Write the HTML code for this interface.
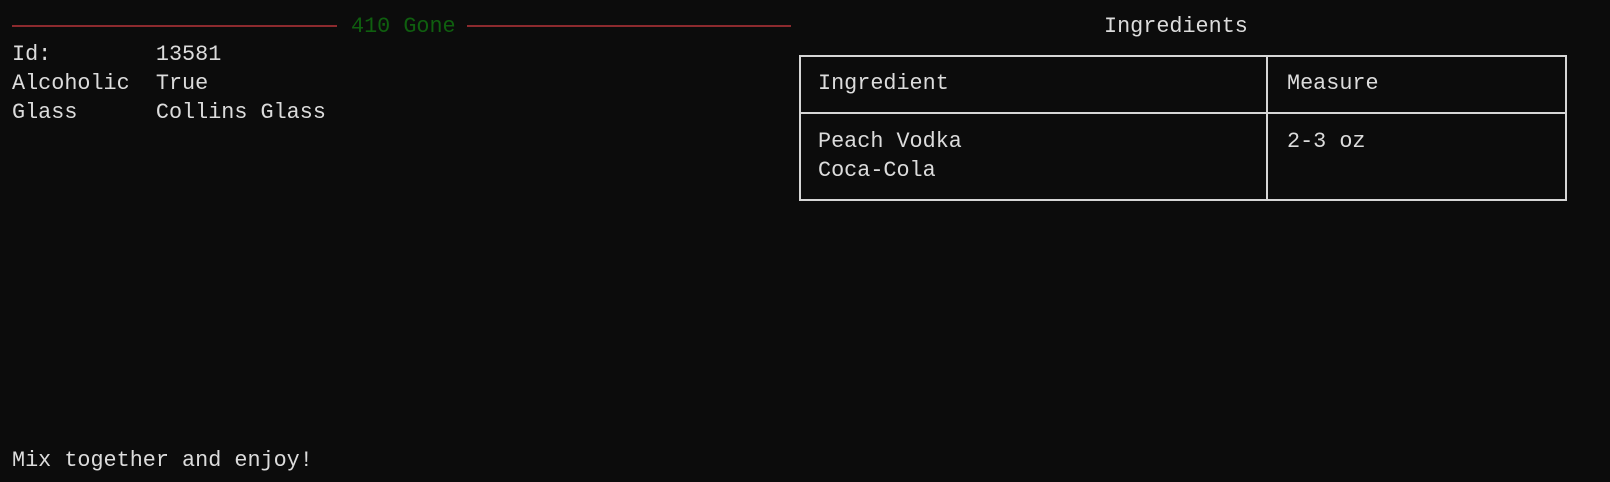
<!DOCTYPE html>
<html><head><meta charset="utf-8"><style>
html,body{margin:0;padding:0;background:#0c0c0c;width:1610px;height:482px;overflow:hidden;}
body{position:relative;font-family:"Liberation Mono",monospace;font-size:21.8px;color:#dcdcdc;}
.t{position:absolute;line-height:29px;white-space:pre;}
.ln{position:absolute;height:2px;background:#8c2a2e;top:25px;}
.b{position:absolute;background:#d6d6d6;}
</style></head><body>
<div class="ln" style="left:12px;width:325px"></div>
<div class="t" style="left:351px;top:12px;color:#0f5f0f">410 Gone</div>
<div class="ln" style="left:467px;width:324px"></div>
<div class="t" style="left:12px;top:40px">Id:        13581</div>
<div class="t" style="left:12px;top:69px">Alcoholic  True</div>
<div class="t" style="left:12px;top:98px">Glass      Collins Glass</div>
<div class="t" style="left:1104px;top:12px">Ingredients</div>
<div class="b" style="left:799px;top:55px;width:768px;height:2px"></div>
<div class="b" style="left:799px;top:112px;width:768px;height:2px"></div>
<div class="b" style="left:799px;top:199px;width:768px;height:2px"></div>
<div class="b" style="left:799px;top:55px;width:2px;height:146px"></div>
<div class="b" style="left:1266px;top:55px;width:2px;height:146px"></div>
<div class="b" style="left:1565px;top:55px;width:2px;height:146px"></div>
<div class="t" style="left:818px;top:69px">Ingredient</div>
<div class="t" style="left:1287px;top:69px">Measure</div>
<div class="t" style="left:818px;top:127px">Peach Vodka</div>
<div class="t" style="left:818px;top:156px">Coca-Cola</div>
<div class="t" style="left:1287px;top:127px">2-3 oz</div>
<div class="t" style="left:12px;top:446px">Mix together and enjoy!</div>
</body></html>
